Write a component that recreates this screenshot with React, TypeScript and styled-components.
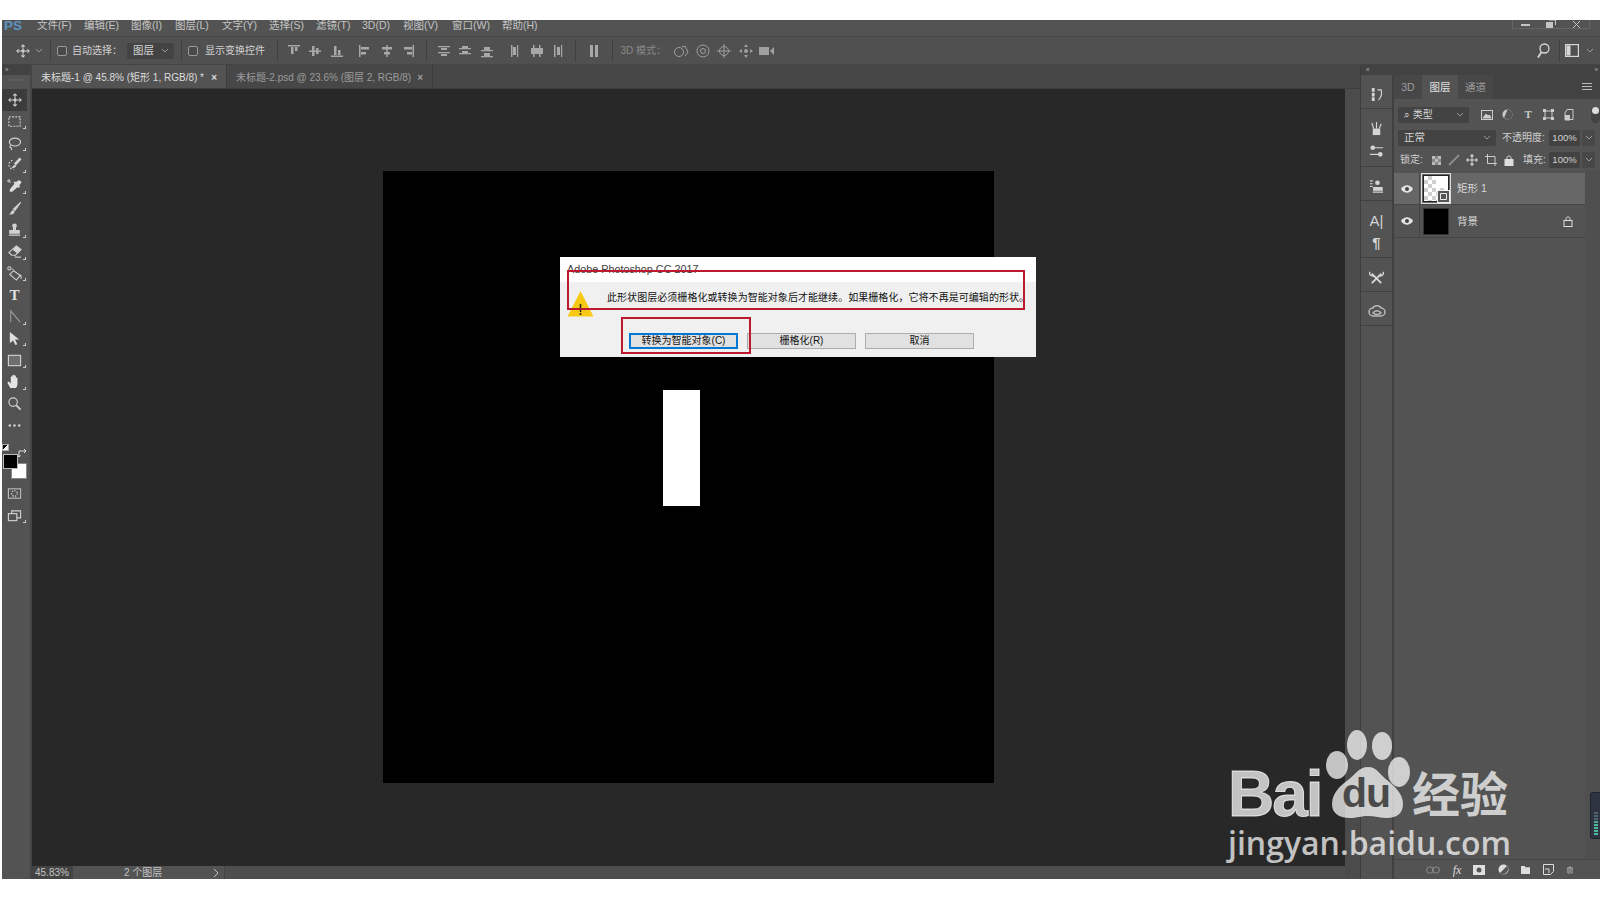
import React from "react";
import styled, { createGlobalStyle } from "styled-components";

const Global = createGlobalStyle`
  html, body { margin: 0; padding: 0; background: #fff; overflow: hidden; }
  * { box-sizing: border-box; }
`;
const CJK = `"Liberation Sans", "Noto Sans CJK SC", sans-serif`;

const Page = styled.div`
  width: 1600px; height: 900px; padding: 20px 0 21px 2px; background: #fff; position: relative; overflow: hidden;
  font-family: ${CJK};
`;
const Win = styled.div`display: flex; flex-direction: column; height: 859px; background: #535353;`;
const MenuBar = styled.div`
  height: 17px; flex: none; display: flex; align-items: flex-start; position: relative; border-bottom: 1px solid #474747;
  background: #535353;
`;
const Logo = styled.span`
  font: bold 13.5px/11px "Liberation Sans", sans-serif; color: #5d93c4; width: 35px; padding-left: 2px; flex: none;
`;
const MenuItem = styled.span<{ $w: number }>`
  width: ${(p) => p.$w}px; flex: none; font-size: 10.5px; line-height: 11px; color: #c4c4c4; white-space: nowrap;
`;
const WinCtl = styled.div`
  position: absolute; right: 10px; top: 0; width: 78px; height: 9px; border: 1px solid #666; border-top: 0;
  display: flex; align-items: center; justify-content: space-around; color: #bbb;
`;
const Options = styled.div`
  height: 28px; flex: none; display: flex; align-items: center; background: #505050; border-bottom: 1px solid #444; color: #cfcfcf;
`;
const Cell = styled.span<{ $w?: number; $ml?: number }>`
  flex: none; width: ${(p) => p.$w ?? 16}px; margin-left: ${(p) => p.$ml ?? 0}px; display: flex; align-items: center; justify-content: center;
  svg { display: block; }
`;
const Sep = styled.span<{ $ml: number }>`flex: none; width: 1px; height: 22px; background: #404040; margin-left: ${(p) => p.$ml}px;`;
const Check = styled.span<{ $ml: number }>`
  flex: none; width: 10px; height: 10px; border: 1px solid #9a9a9a; border-radius: 2px; background: #4a4a4a; margin-left: ${(p) => p.$ml}px;
`;
const OptText = styled.span<{ $w: number; $ml: number; $dim?: boolean }>`
  flex: none; width: ${(p) => p.$w}px; margin-left: ${(p) => p.$ml}px; white-space: nowrap; font-size: 10px; line-height: 1;
  color: ${(p) => (p.$dim ? "#8a8a8a" : "#d0d0d0")};
`;
const Select = styled.div<{ $w: number; $ml?: number; $h?: number; $size?: number }>`
  flex: none; width: ${(p) => p.$w}px; height: ${(p) => p.$h ?? 16}px; margin-left: ${(p) => p.$ml ?? 0}px; background: #434343;
  border-radius: 2px; display: flex; align-items: center; justify-content: space-between; padding: 0 5px 0 6px;
  font-size: ${(p) => p.$size ?? 10.5}px; line-height: 1; color: #d4d4d4; white-space: nowrap;
`;
const Body = styled.div`flex: 1; display: flex; min-height: 0;`;
const ToolCol = styled.div`
  width: 30px; flex: none; display: flex; flex-direction: column; align-items: stretch; background: #535353; border-right: 2px solid #454545;
`;
const Collapse = styled.div<{ $justify?: string }>`
  height: 10px; flex: none; background: #424242; color: #aaa; font-size: 7px; line-height: 10px; letter-spacing: -1px;
  display: flex; justify-content: ${(p) => p.$justify ?? "flex-start"}; padding: 0 3px;
`;
const Grip = styled.div`
  height: 14px; flex: none; margin: 0 6px; background: repeating-linear-gradient(90deg, #666 0 1px, transparent 1px 2px) center 4px / 100% 2px no-repeat;
`;
const ToolList = styled.div`display: flex; flex-direction: column; align-items: stretch;`;
const Tool = styled.div<{ $active?: boolean; $corner?: boolean; $h?: number }>`
  height: ${(p) => p.$h ?? 21.7}px; flex: none; display: flex; align-items: center; justify-content: center; position: relative; width: 25px;
  background: ${(p) => (p.$active ? "#3c3c3c" : "transparent")};
  color: #d2d2d2;
  &::after {
    content: ""; display: ${(p) => (p.$corner ? "block" : "none")}; position: absolute; right: 1px; bottom: 3px; width: 2px; height: 2px;
    border-right: 1px solid #ccc; border-bottom: 1px solid #ccc;
  }
`;
const Colors = styled.div`position: relative; height: 38px; flex: none; width: 28px; margin: 8px 0 0;`;
const MiniReset = styled.span`
  position: absolute; left: 0; top: 0; width: 7px; height: 7px; background: linear-gradient(135deg, #000 50%, #eee 50%); border: 1px solid #aaa;
`;
const SwapIcon = styled.span`position: absolute; left: 16px; top: 0;`;
const Fg = styled.span`position: absolute; left: 1px; top: 10px; width: 15px; height: 15px; background: #000; border: 1px solid #bbb; z-index: 1;`;
const Bg = styled.span`position: absolute; left: 9px; top: 19px; width: 16px; height: 16px; background: #fff; border: 1px solid #888;`;
const Center = styled.div`flex: 1; min-width: 0; display: flex; flex-direction: column;`;
const Tabs = styled.div`height: 24px; flex: none; display: flex; background: #474747; border-bottom: 1px solid #3d3d3d;`;
const Tab = styled.div<{ $active?: boolean; $w: number }>`
  width: ${(p) => p.$w}px; flex: none; background: ${(p) => (p.$active ? "#535353" : "#474747")}; border-right: 1px solid #3d3d3d;
  display: flex; align-items: center; justify-content: space-between; padding: 2px 9px 0 9px;
  font-size: 10px; line-height: 1; white-space: nowrap; color: ${(p) => (p.$active ? "#dcdcdc" : "#9c9c9c")};
`;
const Close = styled.span`font-size: 10px; font-weight: bold; line-height: 1;`;
const Main = styled.div`flex: 1; min-height: 0; display: flex;`;
const WorkCol = styled.div`width: 1313px; flex: none; display: flex; flex-direction: column;`;
const Work = styled.div`flex: 1; min-height: 0; background: #282828; padding: 82px 0 0 351px; position: relative;`;
const Canvas = styled.div`width: 611px; height: 612px; background: #000; padding: 219px 0 0 280px;`;
const WhiteBar = styled.div`width: 37px; height: 116px; background: #fff;`;
const Status = styled.div`height: 13px; flex: none; display: flex; background: #4e4e4e; font-size: 10px; line-height: 13px; color: #c4c4c4;`;
const Zoom = styled.div`width: 41px; flex: none; background: #434343; padding-left: 3px;`;
const DocInfo = styled.div`
  width: 152px; flex: none; background: #535353; border-right: 1px solid #444; padding: 0 5px 0 51px;
  display: flex; justify-content: space-between; align-items: center;
`;
const ScrollStrip = styled.div`width: 15px; flex: none; background: #4b4b4b;`;
const Dock = styled.div`width: 240px; flex: none; display: flex; flex-direction: column; border-left: 1px solid #3d3d3d;`;
const DockBody = styled.div`flex: 1; min-height: 0; display: flex;`;
const IconCol = styled.div`width: 33px; flex: none; display: flex; flex-direction: column; background: #535353; border-right: 2px solid #404040;`;
const IconGroup = styled.div<{ $h: number }>`
  height: ${(p) => p.$h}px; flex: none; border-bottom: 1px solid #404040; background: #535353; display: flex; flex-direction: column;
  align-items: center; justify-content: space-evenly; color: #d4d4d4; padding-top: 5px;
`;
const Panel = styled.div`flex: 1; min-width: 0; display: flex; flex-direction: column; background: #4f4f4f;`;
const PanelTabs = styled.div`height: 24px; flex: none; display: flex; background: #424242; align-items: stretch; padding-right: 7px;`;
const PanelTab = styled.div<{ $active?: boolean; $w: number }>`
  width: ${(p) => p.$w}px; flex: none; display: flex; align-items: center; justify-content: center; font-size: 10.5px; line-height: 1;
  background: ${(p) => (p.$active ? "#535353" : "#474747")}; color: ${(p) => (p.$active ? "#e0e0e0" : "#9e9e9e")};
`;
const Spacer = styled.span`flex: 1;`;
const PanelRow = styled.div<{ $h: number; $pt?: number }>`
  height: ${(p) => p.$h}px; flex: none; display: flex; align-items: center; padding: ${(p) => p.$pt ?? 0}px 6px 0 4px; background: #535353; color: #cdcdcd;
`;
const PInput = styled.div<{ $ml: number }>`
  width: 31px; height: 16px; flex: none; margin-left: ${(p) => p.$ml}px; background: #424242; border-radius: 2px; font-size: 9.5px; line-height: 16px;
  color: #d4d4d4; text-align: center;
`;
const PDrop = styled.div`
  width: 13px; height: 16px; flex: none; margin-left: 2px; background: #484848; display: flex; align-items: center; justify-content: center;
`;
const Toggle = styled.span`
  flex: none; width: 9px; height: 16px; margin-left: 11px; border-radius: 5px; background: #424242; position: relative;
  &::before { content: ""; position: absolute; left: 1px; top: 0; width: 7px; height: 7px; border-radius: 50%; background: #ddd; }
`;
const Layers = styled.div`flex: 1; min-height: 0; background: #535353; border-right: 15px solid #4f4f4f; padding-top: 2px;`;
const LayerRow = styled.div<{ $sel?: boolean; $h: number }>`
  height: ${(p) => p.$h}px; display: flex; align-items: center; background: ${(p) => (p.$sel ? "#676767" : "#535353")};
  border-bottom: 1px solid #454545; color: #d8d8d8; font-size: 10.5px; line-height: 1;
`;
const Eye = styled.span`
  width: 26px; height: 100%; flex: none; border-right: 1px solid #454545; display: flex; align-items: center; justify-content: center; color: #e0e0e0;
`;
const Thumb = styled.span<{ $kind: "check" | "black" }>`
  width: 26px; height: 27px; flex: none; margin-left: 3px; position: relative; border: 1px solid ${(p) => (p.$kind === "check" ? "#222" : "#333")};
  background: ${(p) => (p.$kind === "check" ? "repeating-conic-gradient(#cfcfcf 0 25%, #fff 0 50%) 0 0 / 8px 8px" : "#000")};
  outline: ${(p) => (p.$kind === "check" ? "1px solid #ddd" : "none")}; outline-offset: 1px;
`;
const ThumbWhite = styled.span`position: absolute; left: 12px; top: 0; width: 12px; height: 12px; background: #fff;`;
const ShapeBadge = styled.span`
  position: absolute; right: -2px; bottom: -2px; width: 13px; height: 13px; background: #555; border: 1px solid #eee; color: #eee;
`;
const LayerName = styled.span`margin-left: 8px; white-space: nowrap;`;
const LockSlot = styled.span`margin-left: auto; margin-right: 12px; color: #ddd; display: flex;`;
const PanelFoot = styled.div`
  height: 20px; flex: none; background: #535353; border-top: 1px solid #454545; display: flex; align-items: center; color: #cfcfcf; padding-left: 31px;
`;
const FootCell = styled.span<{ $w: number }>`width: ${(p) => p.$w}px; flex: none; display: flex; justify-content: center;`;
const Dialog = styled.div`
  position: absolute; left: 528px; top: 168px; width: 476px; height: 100px; background: #f0f0f0; display: flex; flex-direction: column;
  font-family: ${CJK}; color: #111; z-index: 3;
`;
const DTitle = styled.div`height: 25px; flex: none; background: #fff; padding: 7px 0 0 7px; font: 10.8px/1 "Liberation Sans", sans-serif; color: #3c3c3c;`;
const DMsg = styled.div`height: 24px; flex: none; display: flex; align-items: center; position: relative; padding-left: 47px; margin-top: 4px;`;
const DMsgText = styled.span`font-size: 10px; line-height: 1; letter-spacing: 0.05px; white-space: nowrap; color: #111;`;
const DWarn = styled.span`position: absolute; left: 7px; top: 4px;`;
const DBtns = styled.div`display: flex; padding: 23px 0 0 69px; gap: 9px;`;
const DBtn = styled.div<{ $w: number; $ghost?: boolean }>`
  width: ${(p) => p.$w}px; height: 16px; flex: none; background: #e1e1e1; border: ${(p) => (p.$ghost ? "1px solid #adadad" : "2px solid #0078d7")};
  display: flex; align-items: center; justify-content: center; font-size: 10px; line-height: 1; color: #111; white-space: nowrap;
`;
const Mark = styled.div<{ $l: number; $t: number; $w: number; $h: number }>`
  position: absolute; left: ${(p) => p.$l}px; top: ${(p) => p.$t}px; width: ${(p) => p.$w}px; height: ${(p) => p.$h}px;
  border: 2px solid #bb1a2e; z-index: 4; pointer-events: none;
`;
const Meter = styled.div`
  position: absolute; left: 1590px; top: 792px; width: 10px; height: 47px; background: #2e3440; border: 1px solid #20242c; border-right: 0; border-radius: 3px 0 0 3px;
  display: flex; flex-direction: column; justify-content: flex-end; padding: 2px 2px 3px 3px; gap: 1px; z-index: 2;
`;
const MeterDash = styled.span<{ $c: string }>`height: 2px; flex: none; background: ${(p) => p.$c};`;
const Wm = styled.div`position: absolute; left: 0; top: 0; z-index: 5; pointer-events: none;`;
const WmBai = styled.span`
  position: absolute; left: 1228px; top: 762px; font: bold 64px/1 "Liberation Sans", sans-serif; color: rgba(255,255,255,0.72); letter-spacing: -2px; white-space: nowrap;
  -webkit-text-stroke: 1px rgba(255,255,255,0.72);
`;
const WmDu = styled.span`
  position: absolute; left: 1342px; top: 773px; font: bold 41px/1 "Liberation Sans", sans-serif; color: #4a4a4a; letter-spacing: -1px; white-space: nowrap;
`;
const WmCn = styled.span`
  position: absolute; left: 1412px; top: 767px; font: bold 48px/1 "Noto Sans CJK SC", sans-serif; color: rgba(255,255,255,0.72); white-space: nowrap;
`;
const WmUrl = styled.span`
  position: absolute; left: 1228px; top: 827px; font: 600 32px/1 "Open Sans", sans-serif; color: rgba(255,255,255,0.72); white-space: nowrap;
`;
const WmPaw = styled.svg`position: absolute; left: 1325px; top: 725px;`;
const TG = styled.span`font: bold 15px/1 "Liberation Serif", serif; color: #e0e0e0; display: block;`;
const DA = styled.span`font: 15px/1 "Liberation Sans", sans-serif; color: #d4d4d4;`;
const DP = styled.span`font: bold 15px/1 "Liberation Sans", sans-serif; color: #d4d4d4;`;
const TypeMini = styled.span`font: bold 11px/1 "Liberation Serif", serif; color: #ccc;`;
const FxText = styled.span`font: italic 12px/1 "Liberation Serif", serif; color: #ddd;`;
const Tint = styled.span`color: #ddd; display: flex;`;

const S: React.FC<{ s?: number; children: React.ReactNode }> = ({ s = 15, children }) => (
  <svg width={s} height={s} viewBox="0 0 16 16" fill="none" stroke="currentColor" strokeWidth="1.2">{children}</svg>
);
const Move = () => <S s={14}><path d="M8 1v14M1 8h14M6 3l2-2 2 2M6 13l2 2 2-2M3 6 1 8l2 2M13 6l2 2-2 2" /><rect x="6.5" y="6.5" width="3" height="3" fill="currentColor" stroke="none" /></S>;
const Chev = ({ c = "#999" }: { c?: string }) => <svg width="8" height="6" viewBox="0 0 8 6" fill="none" stroke={c}><path d="M1 1l3 3 3-3" /></svg>;
const Al = ({ d }: { d: string }) => <svg width="14" height="14" viewBox="0 0 14 14" fill="#a8a8a8" stroke="none"><path d={d} /></svg>;
const dim = "#a0a0a0";

const tools: { k: string; corner?: boolean; active?: boolean; el: React.ReactNode }[] = [
  { k: "move", active: true, el: <Move /> },
  { k: "marq", corner: true, el: <S><rect x="2" y="3" width="12" height="10" strokeDasharray="2 1.4" /></S> },
  { k: "lasso", corner: true, el: <S><ellipse cx="8.5" cy="6.5" rx="6" ry="4.2" /><path d="M4 10c-1.5 1-1 2.5.5 2.5M4.500 12.500l.5 2.500" /></S> },
  { k: "quick", corner: true, el: <S><path d="M6 3.500a5 5 0 0 0-4 4.500c0 3 2 5 5 5" strokeDasharray="2 1.4" /><path d="M14.500 1.500 8.500 8" strokeWidth="3" /><path d="M8 9c-.8.2-1 1.500-2 2 1.500.5 3-.5 3-1.700z" fill="currentColor" /></S> },
  { k: "drop", corner: true, el: <S><path d="M14 2c-1-1-2-1-3 0L9.500 3.500 8.500 2.500 7 4l1 1L3 11v2.500h2.500l6-5 1 1L14 8l-1-1 1.500-2c.7-1 1-2 .5-3z" fill="#ddd" stroke="none" /><path d="M1 1h2v2H1zM4 4l-1-1" strokeWidth="1" /></S> },
  { k: "brush", el: <S><path d="M14.500 1.500 7 8.500l1.500 1.500z" fill="currentColor" /><path d="M6.500 9.500C4 10 5 13 2 14c3 1 6.500 0 6-3z" fill="currentColor" stroke="none" /></S> },
  { k: "stamp", corner: true, el: <S><circle cx="8" cy="4" r="2.500" fill="currentColor" stroke="none" /><path d="M7 6h2v3H7zM3 9h10v3H3zM2 14h12" fill="currentColor" /></S> },
  { k: "eraser", corner: true, el: <S><path d="M10 2 15 6 9 12H5L2 9z" /><path d="M10 2 15 6 11 10 6 6z" fill="currentColor" stroke="none" /><path d="M8 14h7" /></S> },
  { k: "bucket", corner: true, el: <S><path d="M7 5l7 5-4 5-7-6z" /><path d="M13 9l2 1.500v3" /><path d="M1 1h3v3H1zM5 3l2 1" strokeWidth="1" /></S> },
  { k: "type", el: <TG>T</TG> },
  { k: "path", corner: true, el: <S><path d="M4 14V2l10 12" stroke="#9a9a9a" /></S> },
  { k: "arrow", corner: true, el: <S><path d="M3 1v12l3.500-3 2.500 5 2-1-2.500-5H13z" fill="#e0e0e0" stroke="none" /></S> },
  { k: "rect", corner: true, el: <S><rect x="1.500" y="2.500" width="13" height="11" fill="#6f6f6f" stroke="#d0d0d0" /></S> },
  { k: "hand", corner: true, el: <S s={17}><path d="M4 14 1.500 9.500c-.5-1 1-1.800 2-.8L4.500 10V4c0-1.200 1.500-1.200 1.500 0v3V2.500c0-1.200 1.700-1.200 1.700 0V7V3c0-1.200 1.600-1.200 1.600 0v4.500V5c0-1 1.500-1 1.500 0v5c0 2-.8 3-1.500 4z" fill="#e4e4e4" stroke="none" /></S> },
  { k: "zoom", el: <S><circle cx="6.500" cy="6.500" r="4.500" /><path d="M10 10l4.500 4.500" strokeWidth="2" /></S> },
  { k: "more", el: <S><circle cx="3" cy="8" r="1.300" fill="currentColor" stroke="none" /><circle cx="8" cy="8" r="1.300" fill="currentColor" stroke="none" /><circle cx="13" cy="8" r="1.300" fill="currentColor" stroke="none" /></S> },
];

const menu: [string, number][] = [["文件(F)", 47], ["编辑(E)", 47], ["图像(I)", 44], ["图层(L)", 47], ["文字(Y)", 47], ["选择(S)", 47], ["滤镜(T)", 46], ["3D(D)", 41], ["视图(V)", 49], ["窗口(W)", 50], ["帮助(H)", 40]];

const aT = "M1 1h12v1.500H1zM4 3h2.500v7H4zM8 3h2.500v4H8z";
const aM = "M1 6.500h12V8H1zM4 2h2.500v10H4zM8 4h2.500v6H8z";
const aB = "M1 11.500h12V13H1zM4 2h2.500v9H4zM8 6h2.500v5H8z";
const aL = "M1 1h1.500v12H1zM3 3h8v2.500H3zM3 8h5v2.500H3z";
const aC = "M6.200 1h1.500v12H6.200zM2 3h10v2.500H2zM4 8h6v2.500H4z";
const aR = "M11.500 1H13v12h-1.500zM3 3h8v2.500H3zM6 8h5v2.500H6z";
const dT = "M1 2h12v1.200H1zM4 4h6v2H4zM1 8h12v1.200H1zM4 10h6v2H4z";
const dM = "M1 4h12v1.200H1zM4 2h6v2H4zM1 9h12v1.200H1zM4 7h6v2H4z";
const dB = "M1 6h12v1.200H1zM4 3h6v3H4zM1 12h12v1.200H1zM4 9h6v3H4z";
const dL = "M3 1h1.500v12H3zM5 3h3v8H5zM9 1h1.200v12H9z";
const dC = "M3 1h1.500v12H3zM1 4h6v6H1zM9 1h1.500v12H9zM7 4h6v6H7z";
const dR = "M3 1h1.500v12H3zM6 3h3v8H6zM10 1h1.200v12H10z";

const dockIcons = [
  { h: 34, items: [<S key="a"><path d="M3 1h3v4H3zM3 6h3v4H3zM3 11h3v4H3z" fill="currentColor" stroke="none" /><path d="M9 3h4c1 4 0 8-3 11" /></S>] },
  { h: 58, items: [
    <S key="b"><path d="M4 8h8v7H4z" fill="currentColor" stroke="none" /><path d="M5 8 3 2M8 8V1M11 8l2-5" /></S>,
    <S key="c"><circle cx="4" cy="4" r="2.500" fill="currentColor" stroke="none" /><path d="M6 4h9M1 11h9" /><circle cx="12" cy="11" r="2.500" fill="currentColor" stroke="none" /></S>,
  ] },
  { h: 34, items: [<S key="d"><path d="M1 2h3M1 5h3M1 8h3" /><circle cx="9" cy="4" r="2.500" fill="currentColor" stroke="none" /><path d="M5 9h9v3H5zM4 14h11" fill="currentColor" /></S>] },
  { h: 57, items: [
    <DA key="e">A|</DA>,
    <DP key="f">¶</DP>,
  ] },
  { h: 34, items: [<S key="g"><path d="M3 14 13 4M13 14 3 4" strokeWidth="2" /><path d="M1 2a3 3 0 0 0 4 4M15 2a3 3 0 0 1-4 4" strokeWidth="1.500" /></S>] },
  { h: 34, items: [<svg key="h" width="18" height="14" viewBox="0 0 18 14" fill="none" stroke="#b8b8b8" strokeWidth="1.500"><path d="M5 12a4 4 0 0 1 0-8c1-3 7-3 8 0a4 4 0 0 1 0 8z" /><path d="M5 9c2-3 6-3 8 0-2 2-6 2-8 0z" /></svg>] },
];

const EyeIcon = () => <svg width="12" height="8" viewBox="0 0 12 8"><path d="M0 4c3-5 9-5 12 0-3 5-9 5-12 0z" fill="#e4e4e4" /><circle cx="6" cy="4" r="2" fill="#444" /></svg>;
const Lock = ({ solid }: { solid?: boolean }) => <svg width="10" height="11" viewBox="0 0 10 11" fill={solid ? "currentColor" : "none"} stroke="currentColor"><rect x="1" y="4.500" width="8" height="6" /><path d="M3 4.500V2.500c0-2 4-2 4 0v2" fill="none" /></svg>;

export default function App() {
  return (
    <Page>
      <Global />
      <Win>
        <MenuBar>
          <Logo>PS</Logo>
          {menu.map(([t, w]) => <MenuItem key={t} $w={w}>{t}</MenuItem>)}
          <WinCtl>
            <svg width="9" height="7" viewBox="0 0 9 7" fill="#c4c4c4"><rect y="3" width="9" height="2" /></svg>
            <svg width="10" height="8" viewBox="0 0 10 8" fill="none" stroke="#c4c4c4"><rect x=".5" y="2.500" width="6" height="5" fill="#c4c4c4" /><path d="M3 0h6.500v5" /></svg>
            <svg width="9" height="7" viewBox="0 0 9 7" fill="none" stroke="#c4c4c4"><path d="M1 0l7 7M8 0 1 7" /></svg>
          </WinCtl>
        </MenuBar>
        <Options>
          <Cell $ml={13}><Move /></Cell>
          <Cell $w={8} $ml={4}><Chev /></Cell>
          <Sep $ml={7} />
          <Check $ml={6} />
          <OptText $w={46} $ml={5}>自动选择：</OptText>
          <Select $w={47} $ml={9}>图层<Chev /></Select>
          <Sep $ml={7} />
          <Check $ml={6} />
          <OptText $w={58} $ml={7}>显示变换控件</OptText>
          <Sep $ml={14} />
          <Cell $w={21.5} $ml={5}><Al d={aT} /></Cell>
          <Cell $w={21.5}><Al d={aM} /></Cell>
          <Cell $w={21.5}><Al d={aB} /></Cell>
          <Cell $w={21.5} $ml={7}><Al d={aL} /></Cell>
          <Cell $w={21.5}><Al d={aC} /></Cell>
          <Cell $w={21.5}><Al d={aR} /></Cell>
          <Sep $ml={7} />
          <Cell $w={21.5} $ml={6}><Al d={dT} /></Cell>
          <Cell $w={21.5}><Al d={dM} /></Cell>
          <Cell $w={21.5}><Al d={dB} /></Cell>
          <Cell $w={21.5} $ml={7}><Al d={dL} /></Cell>
          <Cell $w={21.5}><Al d={dC} /></Cell>
          <Cell $w={21.5}><Al d={dR} /></Cell>
          <Sep $ml={6} />
          <Cell $w={21.5} $ml={7}><Al d="M3 1h3v12H3zM8 1h3v12H8z" /></Cell>
          <Sep $ml={7} />
          <OptText $w={38} $ml={8} $dim>3D 模式：</OptText>
          <Cell $w={21.5} $ml={12}><svg width="16" height="14" viewBox="0 0 16 14" fill="none" stroke={dim}><circle cx="6" cy="8" r="4.500" /><path d="M9 3l3-1 3 6-3 4" /></svg></Cell>
          <Cell $w={21.5}><svg width="14" height="14" viewBox="0 0 14 14" fill="none" stroke={dim}><circle cx="7" cy="7" r="6" /><circle cx="7" cy="7" r="2.500" /></svg></Cell>
          <Cell $w={21.5}><svg width="14" height="14" viewBox="0 0 14 14" fill="none" stroke={dim}><circle cx="7" cy="7" r="4.500" /><path d="M7 0v14M0 7h14" /></svg></Cell>
          <Cell $w={21.5}><svg width="14" height="14" viewBox="0 0 14 14" fill={dim}><path d="M7 0l2 3H5zM7 14l2-3H5zM0 7l3-2v4zM14 7l-3-2v4z" /><circle cx="7" cy="7" r="2" /></svg></Cell>
          <Cell $w={21.5}><svg width="16" height="10" viewBox="0 0 16 10" fill={dim}><rect x="0" y="1" width="10" height="8" /><path d="M11 5l4-4v8z" /></svg></Cell>
          <Cell $w={16} $ml={757}><svg width="14" height="16" viewBox="0 0 14 16" fill="none" stroke="#d8d8d8" strokeWidth="1.300"><circle cx="8.500" cy="5.500" r="4.500" /><path d="M5.500 9 2 14.500" strokeWidth="1.800" /></svg></Cell>
          <Sep $ml={8} />
          <Cell $w={14} $ml={5}><svg width="14" height="13" viewBox="0 0 14 13" fill="none" stroke="#d8d8d8" strokeWidth="1.200"><rect x="0.600" y="0.600" width="12.800" height="11.800" /><rect x="1.500" y="1.500" width="4" height="10" fill="#d8d8d8" stroke="none" /></svg></Cell>
          <Cell $w={8} $ml={7}><Chev /></Cell>
        </Options>
        <Body>
          <ToolCol>
            <Collapse>››</Collapse>
            <Grip />
            <ToolList>
              {tools.map((t) => <Tool key={t.k} $active={t.active} $corner={t.corner}>{t.el}</Tool>)}
            </ToolList>
            <Colors>
              <MiniReset />
              <SwapIcon><svg width="10" height="9" viewBox="0 0 10 9" fill="none" stroke="#ddd"><path d="M1 8V2h7M6 0l2 2-2 2M1 8l-1-1.500M1 8l1.500-1.500" /></svg></SwapIcon>
              <Fg /><Bg />
            </Colors>
            <Tool $h={22}><S><rect x="1.500" y="3" width="13" height="10" stroke="#bbb" /><circle cx="8" cy="8" r="3" strokeDasharray="1.500 1.200" /></S></Tool>
            <Tool $h={22} $corner><S><rect x="1.500" y="6" width="9" height="7.500" fill="#535353" /><path d="M5 6V3h9.500v7.500h-4" /></S></Tool>
          </ToolCol>
          <Center>
            <Tabs>
              <Tab $active $w={195}>未标题-1 @ 45.8% (矩形 1, RGB/8) * <Close>×</Close></Tab>
              <Tab $w={206}>未标题-2.psd @ 23.6% (图层 2, RGB/8) <Close>×</Close></Tab>
            </Tabs>
            <Main>
              <WorkCol>
                <Work>
                  <Canvas><WhiteBar /></Canvas>
                  <Dialog>
                    <DTitle>Adobe Photoshop CC 2017</DTitle>
                    <DMsg>
                      <DWarn>
                        <svg width="27" height="27" viewBox="0 0 27 27"><path d="M13.500 1 26.500 26.500H.500z" fill="#f6c915" /><path d="M13.500 14v8" stroke="#222" strokeWidth="1.500" /><circle cx="13.500" cy="24" r="1" fill="#222" /></svg>
                      </DWarn>
                      <DMsgText>此形状图层必须栅格化或转换为智能对象后才能继续。如果栅格化，它将不再是可编辑的形状。</DMsgText>
                    </DMsg>
                    <DBtns>
                      <DBtn $w={109}>转换为智能对象(C)</DBtn>
                      <DBtn $w={109} $ghost>栅格化(R)</DBtn>
                      <DBtn $w={109} $ghost>取消</DBtn>
                    </DBtns>
                  </Dialog>
                  <Mark $l={535} $t={181} $w={458} $h={40} />
                  <Mark $l={589} $t={228} $w={130} $h={37} />
                </Work>
                <Status>
                  <Zoom>45.83%</Zoom>
                  <DocInfo><span>2 个图层</span><svg width="6" height="10" viewBox="0 0 6 10" fill="none" stroke="#c4c4c4"><path d="M1 1l4 4-4 4" /></svg></DocInfo>
                </Status>
              </WorkCol>
              <ScrollStrip />
            </Main>
          </Center>
          <Dock>
            <Collapse $justify="space-between"><span>&nbsp;&nbsp;‹‹</span><span>››</span></Collapse>
            <DockBody>
              <IconCol>
                {dockIcons.map((g, i) => <IconGroup key={i} $h={g.h}>{g.items}</IconGroup>)}
              </IconCol>
              <Panel>
                <PanelTabs>
                  <PanelTab $w={28}>3D</PanelTab>
                  <PanelTab $active $w={36}>图层</PanelTab>
                  <PanelTab $w={35}>通道</PanelTab>
                  <Spacer />
                  <svg width="12" height="24" viewBox="0 0 12 24" stroke="#bbb"><path d="M1 8.500h10M1 11.500h10M1 14.500h10" /></svg>
                </PanelTabs>
                <PanelRow $h={28} $pt={3}>
                  <Select $w={71} $size={10}><span>⌕ 类型</span><Chev /></Select>
                  <Cell $w={20.500} $ml={8}><svg width="12" height="10" viewBox="0 0 12 10" fill="none" stroke="#ccc"><rect x=".5" y=".5" width="11" height="9" /><path d="M2 8l3-4 2 2 1.500-1L10 8z" fill="#ccc" /></svg></Cell>
                  <Cell $w={20.500}><svg width="11" height="11" viewBox="0 0 11 11"><circle cx="5.500" cy="5.500" r="5" fill="#ccc" /><path d="M5.500 .5a5 5 0 0 1 0 10L2 9z" fill="#555" /></svg></Cell>
                  <Cell $w={20.500}><TypeMini>T</TypeMini></Cell>
                  <Cell $w={20.500}><svg width="11" height="11" viewBox="0 0 11 11" fill="#ccc" stroke="#ccc"><path d="M2 2h7v7H2z" fill="none" /><rect x="0" y="0" width="3" height="3" stroke="none" /><rect x="8" y="0" width="3" height="3" stroke="none" /><rect x="0" y="8" width="3" height="3" stroke="none" /><rect x="8" y="8" width="3" height="3" stroke="none" /></svg></Cell>
                  <Cell $w={20.500}><svg width="11" height="12" viewBox="0 0 11 12" fill="none" stroke="#ccc"><path d="M3 .5h6v10H1V4z" /><rect x="1" y="6" width="5" height="5.500" fill="#ccc" stroke="none" /></svg></Cell>
                  <Toggle />
                </PanelRow>
                <PanelRow $h={21}>
                  <Select $w={98} $size={10.500}>正常<Chev /></Select>
                  <OptText $w={44} $ml={6}>不透明度:</OptText>
                  <PInput $ml={3}>100%</PInput>
                  <PDrop><Chev /></PDrop>
                </PanelRow>
                <PanelRow $h={23} $pt={1}>
                  <OptText $w={24} $ml={2}>锁定:</OptText>
                  <Cell $w={18} $ml={3}><svg width="9" height="9" viewBox="0 0 9 9"><rect width="9" height="9" fill="#888" /><rect x="0" y="0" width="3" height="3" fill="#bbb" /><rect x="6" y="0" width="3" height="3" fill="#bbb" /><rect x="3" y="3" width="3" height="3" fill="#bbb" /><rect x="0" y="6" width="3" height="3" fill="#bbb" /><rect x="6" y="6" width="3" height="3" fill="#bbb" /></svg></Cell>
                  <Cell $w={18}><svg width="12" height="12" viewBox="0 0 12 12" stroke="#8c8c8c" strokeWidth="2" fill="none"><path d="M11 1 3 9 1 11" /></svg></Cell>
                  <Cell $w={18}><svg width="12" height="12" viewBox="0 0 16 16" fill="none" stroke="#ccc" strokeWidth="1.600"><path d="M8 1v14M1 8h14M6 3l2-2 2 2M6 13l2 2 2-2M3 6 1 8l2 2M13 6l2 2-2 2" /></svg></Cell>
                  <Cell $w={19}><svg width="12" height="12" viewBox="0 0 12 12" fill="none" stroke="#ccc"><path d="M0 2.500h10V12M2.500 0v9.500H12" /></svg></Cell>
                  <Cell $w={18}><Tint><Lock solid /></Tint></Cell>
                  <OptText $w={24} $ml={5}>填充:</OptText>
                  <PInput $ml={2}>100%</PInput>
                  <PDrop><Chev /></PDrop>
                </PanelRow>
                <Layers>
                  <LayerRow $sel $h={32}>
                    <Eye><EyeIcon /></Eye>
                    <Thumb $kind="check"><ThumbWhite /><ShapeBadge><svg width="11" height="11" viewBox="0 0 11 11" fill="none" stroke="#eee"><path d="M2.500 2.500h6v6h-6z" /></svg></ShapeBadge></Thumb>
                    <LayerName>矩形 1</LayerName>
                  </LayerRow>
                  <LayerRow $h={33}>
                    <Eye><EyeIcon /></Eye>
                    <Thumb $kind="black" />
                    <LayerName>背景</LayerName>
                    <LockSlot><Lock /></LockSlot>
                  </LayerRow>
                </Layers>
                <PanelFoot>
                  <FootCell $w={16}><svg width="14" height="8" viewBox="0 0 14 8" fill="none" stroke="#8c8c8c"><rect x=".5" y="1" width="7" height="6" rx="3" /><rect x="6.500" y="1" width="7" height="6" rx="3" /></svg></FootCell>
                  <FootCell $w={32}><FxText>fx</FxText></FootCell>
                  <FootCell $w={12}><svg width="12" height="10" viewBox="0 0 12 10"><rect width="12" height="10" fill="#e0e0e0" /><circle cx="6" cy="5" r="2.500" fill="#555" /></svg></FootCell>
                  <FootCell $w={36}><svg width="11" height="11" viewBox="0 0 11 11"><circle cx="5.500" cy="5.500" r="5" fill="#ddd" /><path d="M9 2a5 5 0 0 1-7 7z" fill="#555" /></svg></FootCell>
                  <FootCell $w={9}><svg width="11" height="10" viewBox="0 0 11 10" fill="#ddd"><path d="M0 0h5v1.500h6V10H0z" /></svg></FootCell>
                  <FootCell $w={37}><svg width="11" height="11" viewBox="0 0 11 11" fill="none" stroke="#ddd"><path d="M.5.500h10v7L7.500 10.500H.5z" /><path d="M2 5h4v4" /></svg></FootCell>
                  <FootCell $w={6}><svg width="11" height="12" viewBox="0 0 11 12" fill="none" stroke="#ddd"><path d="M0 2.500h11M3.500 2.500V.5h4v2M1.500 2.500v9h8v-9M4 4.500v5M7 4.500v5" /></svg></FootCell>
                </PanelFoot>
              </Panel>
            </DockBody>
          </Dock>
        </Body>
      </Win>
      <Meter>
        {["#4f6070", "#4f6070", "#4f6070", "#4fa88f", "#4fb89a", "#4fb89a", "#4fb89a", "#4fb89a"].map((c, i) => <MeterDash key={i} $c={c} />)}
      </Meter>
      <Wm>
        <WmBai>Bai</WmBai>
        <WmPaw width="85" height="100" viewBox="0 0 85 100" fill="rgba(255,255,255,0.72)">
          <ellipse cx="32" cy="20" rx="10" ry="15" />
          <ellipse cx="57" cy="21" rx="10" ry="14" />
          <ellipse cx="12" cy="40" rx="11" ry="14" />
          <ellipse cx="74" cy="47" rx="11" ry="15" />
          <path d="M43 42c-9 0-12 7-20 13-8 6-16 13-16 24 0 10 8 14 18 14 7 0 11-2 18-2s12 2 19 2c10 0 16-5 16-14 0-11-9-18-16-24-7-5-10-13-19-13z" />
        </WmPaw>
        <WmDu>du</WmDu>
        <WmCn>经验</WmCn>
        <WmUrl>jingyan.baidu.com</WmUrl>
      </Wm>
    </Page>
  );
}
